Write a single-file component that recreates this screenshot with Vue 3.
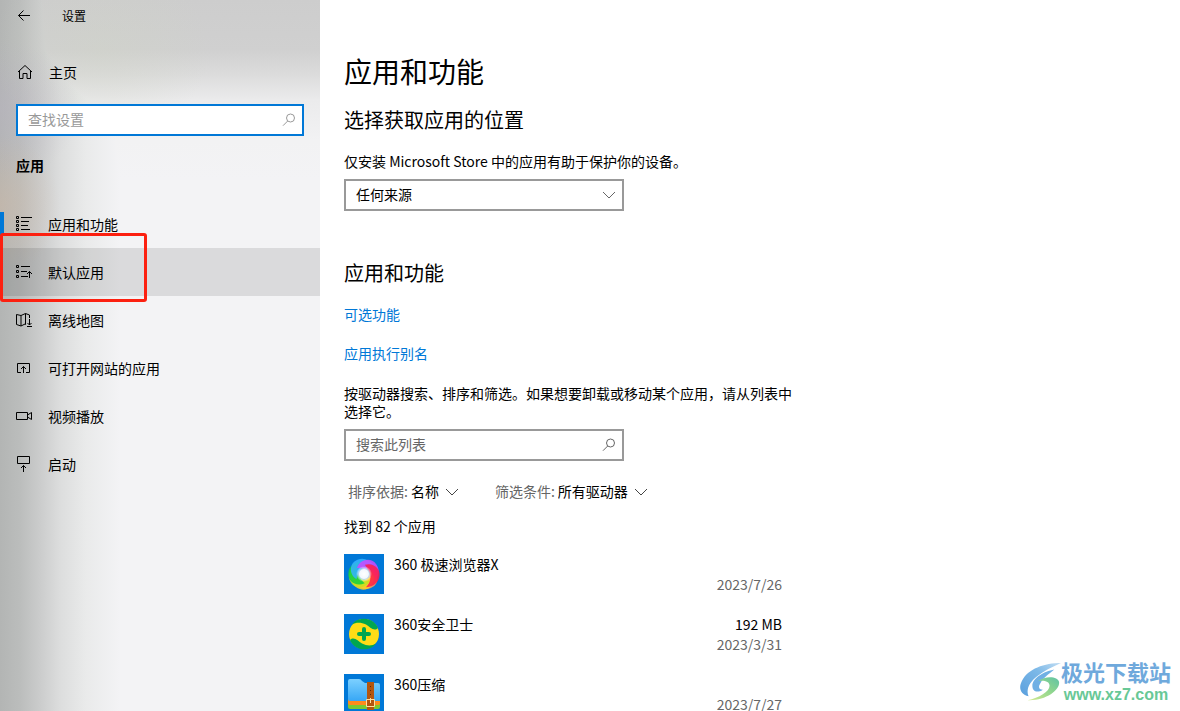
<script setup>
import { ref } from 'vue'

const navItems = [
  { id: 'features', label: '应用和功能', active: true },
  { id: 'defaults', label: '默认应用', hovered: true, marked: true },
  { id: 'maps', label: '离线地图' },
  { id: 'websites', label: '可打开网站的应用' },
  { id: 'video', label: '视频播放' },
  { id: 'startup', label: '启动' }
]

const apps = [
  { id: 'browser', name: '360 极速浏览器X', size: '', date: '2023/7/26' },
  { id: 'safe', name: '360安全卫士', size: '192 MB', date: '2023/3/31' },
  { id: 'zip', name: '360压缩', size: '', date: '2023/7/27' }
]

const petals = [
  { angle: 100, color: '#ff9a5a' },
  { angle: 145, color: '#ffd21f' },
  { angle: 190, color: '#c8e01e' },
  { angle: 225, color: '#12d040' },
  { angle: 285, color: '#35b2ff' },
  { angle: 0, color: '#cc4bff' },
  { angle: 55, color: '#ff1c48' }
]

const query = ref('')
const listQuery = ref('')
</script>

<template>
  <div class="window">
    <aside class="sidebar">
      <header class="titlebar">
        <button class="back" aria-label="返回">
          <svg width="14" height="14" viewBox="0 0 14 14"><path d="M13 6.500H1.500M6.500 1.500l-5 5 5 5" /></svg>
        </button>
        <span class="window-title">设置</span>
      </header>

      <a class="home" href="#home">
        <svg width="16" height="16" viewBox="0 0 16 16"><path d="M1 8L8 1.500 15 8M2.500 7v7.500h3.500V9.500h4v5h3.500V7" /></svg>
        <span>主页</span>
      </a>

      <div class="field field-accent">
        <input v-model="query" type="text" placeholder="查找设置" aria-label="查找设置" />
        <svg class="field-icon" width="14" height="14" viewBox="0 0 14 14"><circle cx="8.500" cy="5" r="4" /><path d="M5.700 8L1 12.700" /></svg>
      </div>

      <h2 class="group">应用</h2>

      <nav class="nav">
        <a
          v-for="item in navItems"
          :key="item.id"
          :href="'#' + item.id"
          class="nav-item"
          :class="{ active: item.active, hovered: item.hovered }"
        >
          <svg width="16" height="16" viewBox="0 0 16 16">
            <g v-if="item.id === 'features'">
              <path d="M.5.500h2v2h-2zM.5 4.500h2v2h-2zM.5 8.500h2v2h-2zM.5 12.500h2v2h-2zM5 1.500h11M5 5.500h8M5 9.500h7M5 13.500h9" />
            </g>
            <g v-else-if="item.id === 'defaults'">
              <path d="M.5 1.500h2v2h-2zM.5 6.500h2v2h-2zM.5 11.500h2v2h-2zM5 2.500h9M5 7.500h6M5 12.500h7M13.500 14V7.500M11 10l2.500-2.500L16 10" />
            </g>
            <g v-else-if="item.id === 'maps'">
              <path d="M10 12.500l-1-.5-4 2-4.500-1.500v-10L5 3.500l4.500-2 4 1.500v3M5 3.500V14M9.500 1.500V12M13.500 7v6M11.500 11l2 2 2-2M11 14.500h5" />
            </g>
            <g v-else-if="item.id === 'websites'">
              <path d="M5 12.500H1.500v-9h12v9H10M7.500 13V6.500M5 9l2.500-2.500L10 9" />
            </g>
            <g v-else-if="item.id === 'video'">
              <path d="M.5 4.500h11v7H.5zM11.500 7l4-2.500v7l-4-2.500" />
            </g>
            <g v-else>
              <path d="M1.500.500h12v7h-12zM7.500 16v-6.500M5 12l2.500-2.500L10 12" />
            </g>
          </svg>
          <span>{{ item.label }}</span>
          <i v-if="item.marked" class="marker"></i>
        </a>
      </nav>
    </aside>

    <main class="content">
      <h1>应用和功能</h1>

      <section class="source">
        <h2>选择获取应用的位置</h2>
        <label for="source">仅安装 Microsoft Store 中的应用有助于保护你的设备。</label>
        <div class="field">
          <select id="source"><option>任何来源</option></select>
          <svg class="field-icon" width="14" height="14" viewBox="0 0 14 14"><path d="M1 4l6 6 6-6" /></svg>
        </div>
      </section>

      <section class="features">
        <h2>应用和功能</h2>
        <div class="links">
          <a class="link" href="#optional">可选功能</a>
          <a class="link" href="#alias">应用执行别名</a>
        </div>
        <p class="hint">按驱动器搜索、排序和筛选。如果想要卸载或移动某个应用，请从列表中选择它。</p>
        <div class="field">
          <input v-model="listQuery" type="text" placeholder="搜索此列表" aria-label="搜索此列表" />
          <svg class="field-icon" width="14" height="14" viewBox="0 0 14 14"><circle cx="8.500" cy="5" r="4" /><path d="M5.700 8L1 12.700" /></svg>
        </div>

        <div class="filters">
          <div class="filter">
            <label for="sort">排序依据:</label>
            <div class="pick">
              <select id="sort"><option>名称</option></select>
              <svg width="14" height="14" viewBox="0 0 14 14"><path d="M1 4l6 6 6-6" /></svg>
            </div>
          </div>
          <div class="filter">
            <label for="drive">筛选条件:</label>
            <div class="pick">
              <select id="drive"><option>所有驱动器</option></select>
              <svg width="14" height="14" viewBox="0 0 14 14"><path d="M1 4l6 6 6-6" /></svg>
            </div>
          </div>
        </div>

        <p class="count">找到 82 个应用</p>

        <ul class="apps">
          <li v-for="app in apps" :key="app.id" class="app">
            <svg class="app-icon" width="40" height="40" viewBox="0 0 40 40">
              <rect width="40" height="40" fill="#0078d7" />
              <g v-if="app.id === 'browser'">
                <defs>
                  <radialGradient id="glow">
                    <stop offset="0" stop-color="#fff" />
                    <stop offset=".55" stop-color="#fff" stop-opacity=".95" />
                    <stop offset="1" stop-color="#fff" stop-opacity="0" />
                  </radialGradient>
                </defs>
                <path
                  v-for="petal in petals"
                  :key="petal.angle"
                  d="M13 14C16 5 27 3 32 10C36 15 35 21 32 26C31 20 27 15 20 14.500C17 14 15 14 13 14Z"
                  :fill="petal.color"
                  fill-opacity=".86"
                  :transform="`rotate(${petal.angle} 20 20)`"
                />
                <circle cx="20" cy="20" r="8" fill="url(#glow)" />
              </g>
              <g v-else-if="app.id === 'safe'">
                <circle cx="20" cy="20" r="15" fill="#ffdc16" />
                <path d="M8 10.500C13 3 27 2 33 12L34 14C30 18 26 13 22 10.500C17 8 12 8 8 10.500Z" fill="#00a650" />
                <path d="M8 10.500C13 3 27 2 33 12L34 14C30 18 26 13 22 10.500C17 8 12 8 8 10.500Z" fill="#00a650" transform="rotate(180 20 20)" />
                <path d="M20 15v10M15 20h10" stroke="#00a650" stroke-width="4" stroke-linecap="round" />
              </g>
              <g v-else>
                <defs>
                  <linearGradient id="folder" x1="0" y1="0" x2="0" y2="1">
                    <stop offset="0" stop-color="#7cd0ff" />
                    <stop offset="1" stop-color="#37a7f5" />
                  </linearGradient>
                </defs>
                <rect x="4" y="24" width="32" height="11" rx="2" fill="#7bc832" />
                <rect x="4" y="20" width="32" height="11" rx="2" fill="#ff8a1c" />
                <path d="M4 7Q4 5 6 5h9q2 0 3 2l3 2h13q2 0 2 2v16H6q-2 0-2-2z" fill="url(#folder)" />
                <path d="M23 8h7v28h-7z" fill="#b3560f" />
                <path d="M26 12h1v1h-1zM26 16h1v1h-1zM26 20h1v1h-1z" fill="#5d2705" />
                <path d="M22.500 25.500h8v7h-8zM26.500 24v5" fill="none" stroke="#ffe0a0" />
              </g>
            </svg>
            <span class="app-name">{{ app.name }}</span>
            <span class="app-meta">
              <span class="app-size">{{ app.size }}</span>
              <span class="app-date">{{ app.date }}</span>
            </span>
          </li>
        </ul>
      </section>
    </main>

    <div class="watermark">
      <svg width="42" height="42" viewBox="0 0 44 42">
        <defs>
          <linearGradient id="wm-blue" x1="0" y1="1" x2="1" y2="0">
            <stop offset="0" stop-color="#5a9fdd" />
            <stop offset=".6" stop-color="#7db9e8" />
            <stop offset="1" stop-color="#c3def3" />
          </linearGradient>
          <linearGradient id="wm-green" x1="0" y1="1" x2="1" y2="0">
            <stop offset="0" stop-color="#d3ea8e" />
            <stop offset=".6" stop-color="#8bd48f" />
            <stop offset="1" stop-color="#5fc3a6" />
          </linearGradient>
        </defs>
        <path d="M44 1C27 1 9 7 3 20C-1 28 2 34 10 36C7 29 11 21 19 15C26 9 35 5 44 1Z" fill="url(#wm-blue)" />
        <path d="M37 8C26 10 14 17 14 25C14 31 19 33 25 29C21 29 20 26 22 23C25 17 31 13 37 8Z" fill="#70b0e4" />
        <path d="M20 20C28 14 41 15 42 21C43 30 27 41 9 40C21 38 32 31 32 25C32 20 26 19 20 20Z" fill="url(#wm-green)" />
      </svg>
      <div class="watermark-text">
        <strong>极光下载站</strong>
        <span>www.xz7.com</span>
      </div>
    </div>
  </div>
</template>

<style>
body {
  background: #fff;
}
</style>

<style scoped>
.window {
  position: relative;
  display: flex;
  height: 100vh;
  overflow: hidden;
  font: 14px/20px 'Noto Sans CJK SC', sans-serif;
  color: #000;
}

h1,
h2,
p,
ul {
  margin: 0;
  padding: 0;
  font-weight: 400;
}

a {
  color: inherit;
  text-decoration: none;
}

svg {
  flex: none;
  fill: none;
  stroke: #000;
}

.app-icon,
.watermark svg {
  stroke: none;
}

input,
select,
button {
  margin: 0;
  border: 0;
  background: none;
  color: inherit;
  font: inherit;
  appearance: none;
  outline: none;
}

/* Sidebar */
.sidebar {
  flex: none;
  width: 320px;
  background:
    radial-gradient(60px 70px at 0 205px, rgba(214, 185, 160, 0.4), transparent),
    radial-gradient(80px 70px at 0 110px, rgba(185, 178, 196, 0.35), transparent),
    radial-gradient(110px 90px at 100px 50px, rgba(208, 212, 198, 0.4), transparent),
    linear-gradient(#cdcdcd, #d0d0d0 50px, #dcdcdc 75px, #ebebec 100px, #f2f2f3 140px, #f3f3f5 180px),
    linear-gradient(90deg, #b3b5b4, #bbbdbc 20px, #cbcccc 40px, #dcdddd 60px, #e9eaea 85px, #f3f3f5 120px);
  background-blend-mode: normal, normal, normal, darken, normal;
}

.titlebar {
  display: flex;
  align-items: center;
  height: 32px;
  font-size: 12px;
}

.back {
  display: flex;
  align-items: center;
  width: 62px;
  height: 32px;
  padding: 0 0 0 17px;
}

.home {
  display: flex;
  align-items: center;
  gap: 16px;
  height: 48px;
  margin-top: 16px;
  padding-left: 17px;
}

.field {
  position: relative;
  box-sizing: border-box;
  width: 280px;
  height: 32px;
  border: 2px solid #999;
  background: #fff;
}

.field input,
.field select {
  display: block;
  box-sizing: border-box;
  width: 100%;
  height: 28px;
  padding: 0 32px 2px 10px;
}

.field input::placeholder {
  color: #666;
  opacity: 1;
}

.field-icon {
  position: absolute;
  top: 7px;
  right: 6px;
  stroke: #666;
  pointer-events: none;
}

.field-accent {
  width: auto;
  margin: 8px 16px 0;
  border-color: #0078d7;
}

.field-accent input::placeholder {
  color: #999;
}

.field-accent .field-icon {
  stroke: #999;
}

.group {
  margin: 19px 16px 25px;
  font-size: 14px;
  font-weight: 700;
}

.nav-item {
  position: relative;
  display: flex;
  align-items: center;
  gap: 16px;
  height: 48px;
  padding-left: 16px;
}

.nav-item.active::before {
  content: '';
  position: absolute;
  left: 0;
  width: 4px;
  height: 24px;
  background: #0078d7;
}

.nav-item.hovered {
  background: rgba(0, 0, 0, 0.1);
}

.marker {
  position: absolute;
  top: -15px;
  bottom: -6px;
  left: 0;
  z-index: 1;
  box-sizing: border-box;
  width: 147px;
  border: 3px solid #fc2010;
  border-radius: 3px;
  pointer-events: none;
}

/* Content */
.content {
  flex: 1;
  min-width: 0;
  padding: 51px 24px 0;
}

h1 {
  font-size: 28px;
  line-height: 40px;
}

.content h2 {
  font-size: 20px;
  line-height: 28px;
}

.source {
  margin-top: 15px;
}

.source label {
  display: block;
  margin: 17px 0 8px;
}

.features {
  max-width: 456px;
  margin-top: 48px;
}

.links {
  display: grid;
  justify-items: start;
  gap: 19px;
  margin-top: 17px;
}

.link {
  color: #0078d7;
}

.hint {
  margin: 21px 0 9px;
  line-height: 18px;
}

.filters {
  display: flex;
  gap: 36px;
  margin: 20px 4px 15px;
}

.filter {
  display: flex;
  gap: 3px;
}

.filter label {
  color: #666;
}

.pick {
  position: relative;
}

.pick select {
  display: block;
  height: 20px;
  padding: 0 20px 0 0;
}

.pick svg {
  position: absolute;
  top: 4px;
  right: 0;
  stroke: #444;
  pointer-events: none;
}

.apps {
  display: grid;
  gap: 20px;
  margin-top: 18px;
  max-width: 438px;
  list-style: none;
}

.app {
  display: flex;
  gap: 10px;
  height: 40px;
}

.app-name {
  flex: 1;
}

.app-meta {
  display: grid;
  grid-template-rows: 20px 20px;
  text-align: right;
}

.app-date {
  color: #666;
}

/* Watermark */
.watermark {
  position: absolute;
  right: 9px;
  bottom: 8px;
  display: flex;
  align-items: center;
}

.watermark-text {
  display: grid;
  justify-items: center;
}

.watermark strong {
  color: #6fa9dc;
  font: 700 22px/26px 'Liberation Sans', 'Noto Sans CJK SC', sans-serif;
}

.watermark span {
  color: #68c896;
  font: 700 16px/16px 'Liberation Sans', sans-serif;
}
</style>
